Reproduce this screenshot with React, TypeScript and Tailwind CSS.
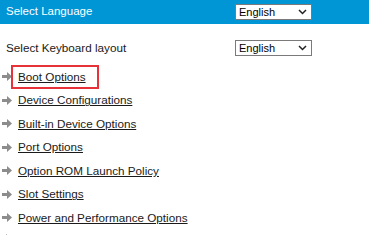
import React from "react"

const items = [
  "Boot Options",
  "Device Configurations",
  "Built-in Device Options",
  "Port Options",
  "Option ROM Launch Policy",
  "Slot Settings",
  "Power and Performance Options",
]

function Arrow() {
  return (
    <svg width="10" height="9" viewBox="0 0 10 9" className="shrink-0">
      <path d="M0 3 H5 V0 L10 4.5 L5 9 V6 H0 Z" fill="#8c8c8c" />
    </svg>
  )
}

function LangSelect() {
  return (
    <div className="flex h-[16px] w-[77px] items-center justify-between border border-[#7a7a7a] bg-white pl-[3px] pr-[4px]">
      <span className="text-[11px] leading-none text-black">English</span>
      <svg width="9" height="6" viewBox="0 0 9 6">
        <path d="M1 1 L4.5 4.5 L8 1" stroke="#222" strokeWidth="1.5" fill="none" />
      </svg>
    </div>
  )
}

export default function App() {
  return (
    <div className="h-[242px] w-[369px] overflow-hidden bg-white font-['Liberation_Sans',Arial,sans-serif] text-[#1a1a1a]">
      {/* header */}
      <div className="flex h-[24px] items-center justify-between bg-[#0096d6] pl-[6px] pr-[57px]">
        <span className="text-[11.5px] text-white">Select Language</span>
        <LangSelect />
      </div>

      <div className="mt-[16px] flex h-[16px] items-center justify-between pl-[6px] pr-[57px]">
        <span className="text-[11.7px]">Select Keyboard layout</span>
        <LangSelect />
      </div>

      <ul className="mt-[9px] flex flex-col">
        {items.map((label, i) => (
          <li key={label} className="flex h-[23.5px] items-center gap-[6px] pl-[2px]">
            <Arrow />
            <span
              className={
                i === 0
                  ? "-ml-[7px] border-2 border-[#e8323a] py-[4px] pl-[5px] pr-[11px] text-[11.7px] leading-[12px] underline"
                  : "text-[11.7px] underline"
              }
            >
              {label}
            </span>
          </li>
        ))}
      </ul>
      <div className="ml-[6px] mt-[4px] h-[1px] w-[1px] bg-[#bbb]" />
    </div>
  )
}
